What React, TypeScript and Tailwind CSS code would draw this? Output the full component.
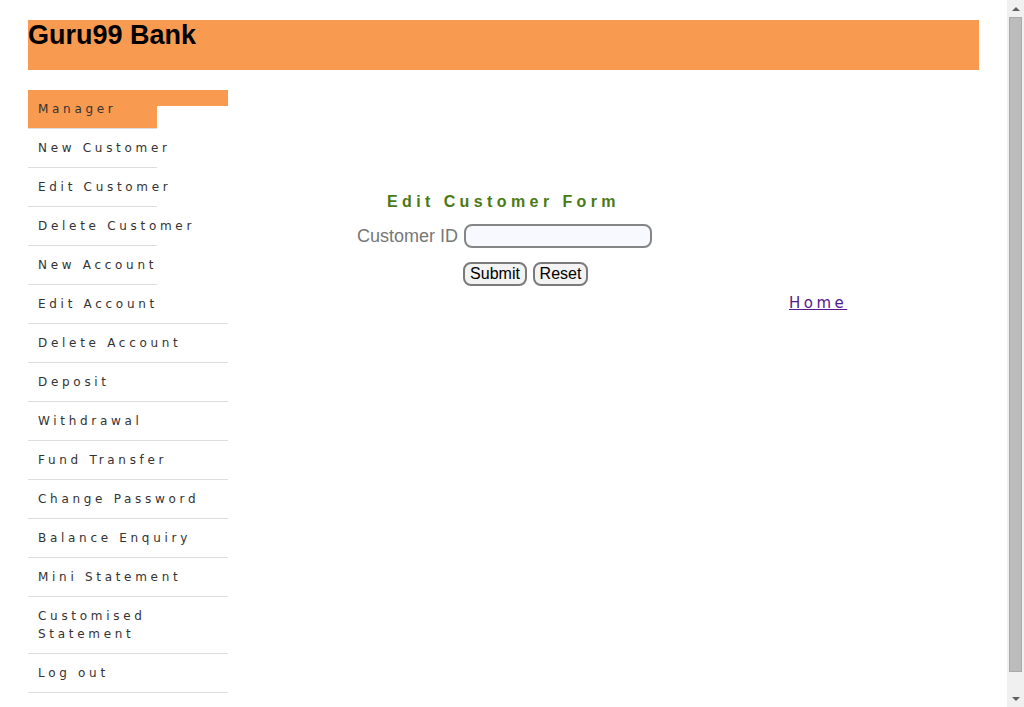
const menu: { label: string; short?: boolean }[] = [
  { label: 'New Customer', short: true },
  { label: 'Edit Customer', short: true },
  { label: 'Delete Customer', short: true },
  { label: 'New Account', short: true },
  { label: 'Edit Account' },
  { label: 'Delete Account' },
  { label: 'Deposit' },
  { label: 'Withdrawal' },
  { label: 'Fund Transfer' },
  { label: 'Change Password' },
  { label: 'Balance Enquiry' },
  { label: 'Mini Statement' },
  { label: 'Customised Statement' },
  { label: 'Log out' },
]

function Sidebar() {
  return (
    <ul className="w-[200px] shrink-0 font-['DejaVu_Sans',sans-serif] text-[12px] leading-[18px] tracking-[3.7px] text-[#333]">
      <li className="flex">
        <div className="w-[129px] bg-[#f89b50] border-b border-[#dddddd] px-[10px] py-[10px] whitespace-nowrap">
          Manager
        </div>
        <div className="flex-1">
          <div className="h-[16px] bg-[#f89b50]" />
        </div>
      </li>
      {menu.map((m) => (
        <li
          key={m.label}
          className={`border-b border-[#dddddd] px-[10px] py-[10px] ${m.short ? 'w-[129px] whitespace-nowrap' : 'w-[200px]'}`}
        >
          {m.label}
        </li>
      ))}
    </ul>
  )
}

function EditForm() {
  return (
    <div className="flex-1 pt-[103px]">
      <h2 className="ml-[159px] whitespace-nowrap font-['Liberation_Sans',Arial,sans-serif] text-[16px] leading-[18px] font-bold tracking-[4.4px] text-[#4a7a14]">
        Edit Customer Form
      </h2>
      <div className="ml-[127px] mt-[9px] flex items-start gap-[6px]">
        <label className="mt-[6px] w-[103px] text-right whitespace-nowrap font-['Liberation_Sans',Arial,sans-serif] text-[18px] leading-[20px] text-[#777]">
          Customer ID
        </label>
        <input
          className="mt-[4px] w-[188px] h-[24px] rounded-[8px] border-2 border-[#858585] bg-[#f8f8ff] outline-none"
          type="text"
        />
      </div>
      <div className="ml-[235px] mt-[14px] flex gap-[6px] font-['Liberation_Sans',Arial,sans-serif] text-[16px] text-black">
        <button className="w-[64px] h-[24px] rounded-[8px] border-2 border-[#7a7a7a] bg-[#f3f3f3] leading-[18px]">
          Submit
        </button>
        <button className="w-[55px] h-[24px] rounded-[8px] border-2 border-[#7a7a7a] bg-[#f3f3f3] leading-[18px]">
          Reset
        </button>
      </div>
      <div className="ml-[561px] mt-[4px]">
        <a
          href="#"
          className="font-['DejaVu_Sans',sans-serif] text-[15px] leading-[18px] tracking-[3.5px] text-[#551a8b] underline"
        >
          Home
        </a>
      </div>
    </div>
  )
}

function Scrollbar() {
  return (
    <div className="w-[17px] h-[707px] shrink-0 bg-[#f0f0f0] flex flex-col">
      <div className="h-[17px] flex items-center justify-center">
        <div className="w-0 h-0 border-l-[4px] border-r-[4px] border-b-[4px] border-l-transparent border-r-transparent border-b-[#606060]" />
      </div>
      <div className="flex-1 px-[2px] pb-[18px]">
        <div className="h-full bg-[#bcbcbc] border border-[#a9a9a9]" />
      </div>
      <div className="h-[17px] flex items-center justify-center">
        <div className="w-0 h-0 border-l-[4px] border-r-[4px] border-t-[4px] border-l-transparent border-r-transparent border-t-[#606060]" />
      </div>
    </div>
  )
}

export default function App() {
  return (
    <div className="flex h-[707px] overflow-hidden bg-white">
      <div className="flex-1 px-[28px] pt-[20px]">
        <header className="h-[50px] bg-[#f89b50]">
          <h1 className="font-['Liberation_Sans',Arial,sans-serif] text-[27px] leading-[31px] font-bold text-black">
            Guru99 Bank
          </h1>
        </header>
        <div className="mt-[20px] flex items-start">
          <Sidebar />
          <EditForm />
        </div>
      </div>
      <Scrollbar />
    </div>
  )
}
